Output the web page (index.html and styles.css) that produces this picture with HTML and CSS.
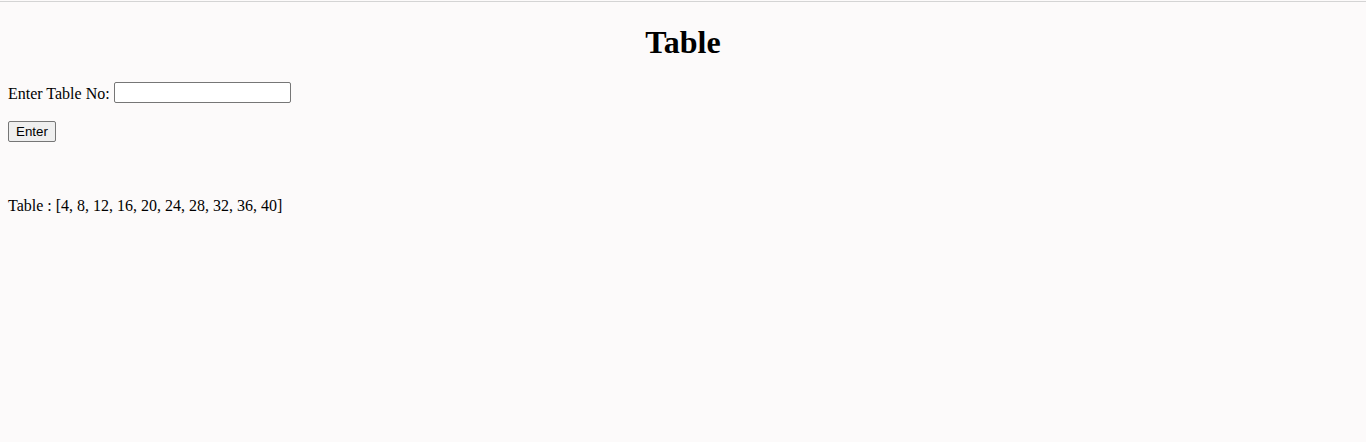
FILE: index.html
```html
<!DOCTYPE html>
<html>
<head>
<meta charset="utf-8">
<link rel="stylesheet" href="styles.css">
</head>
<body>
<div class="topline"></div>
<div class="page">
  <h1 class="title">Table</h1>
  <form class="form">
    <div class="field"><label class="label" for="tableNo">Enter Table No:</label> <input type="text" id="tableNo" class="input"></div>
    <div class="actions"><button type="button" class="btn">Enter</button></div>
  </form>
  <p class="result">Table : [4, 8, 12, 16, 20, 24, 28, 32, 36, 40]</p>
</div>
</body>
</html>
```
FILE: styles.css
```css
html, body {
  margin: 0;
  padding: 0;
  background: #fcfafa;
}
body {
  font-family: "Liberation Serif", "Times New Roman", serif;
  font-size: 16px;
  color: #000;
}
.topline {
  height: 1px;
  margin-top: 1px;
  background: #d4d4d4;
}
.page {
  padding: 0 8px;
  display: flow-root;
}
.title {
  text-align: center;
  font-size: 32px;
  font-weight: bold;
  margin: 22px 0 21px;
  line-height: 37px;
}
.form {
  margin: 0;
}
.field {
  height: 21px;
  display: flex;
  align-items: center;
}
.label {
  margin-right: 4px;
  padding-top: 2px;
}
.input {
  font-family: "Liberation Sans", Arial, sans-serif;
  font-size: 13.333px;
  width: 171px;
  height: 15px;
  padding: 2px 2px;
  border: 1px solid #767676;
  border-radius: 2px;
  background: #fff;
  box-sizing: content-box;
  margin: 0;
}
.actions {
  margin-top: 18px;
  height: 21px;
}
.btn {
  font-family: "Liberation Sans", Arial, sans-serif;
  font-size: 13.333px;
  height: 21px;
  padding: 0 7px;
  margin: 0;
  border: 1px solid #767676;
  border-radius: 2px;
  background: #efefef;
  color: #000;
  box-sizing: border-box;
  width: 48px;
}
.result {
  margin: 55px 0 0;
}
```
